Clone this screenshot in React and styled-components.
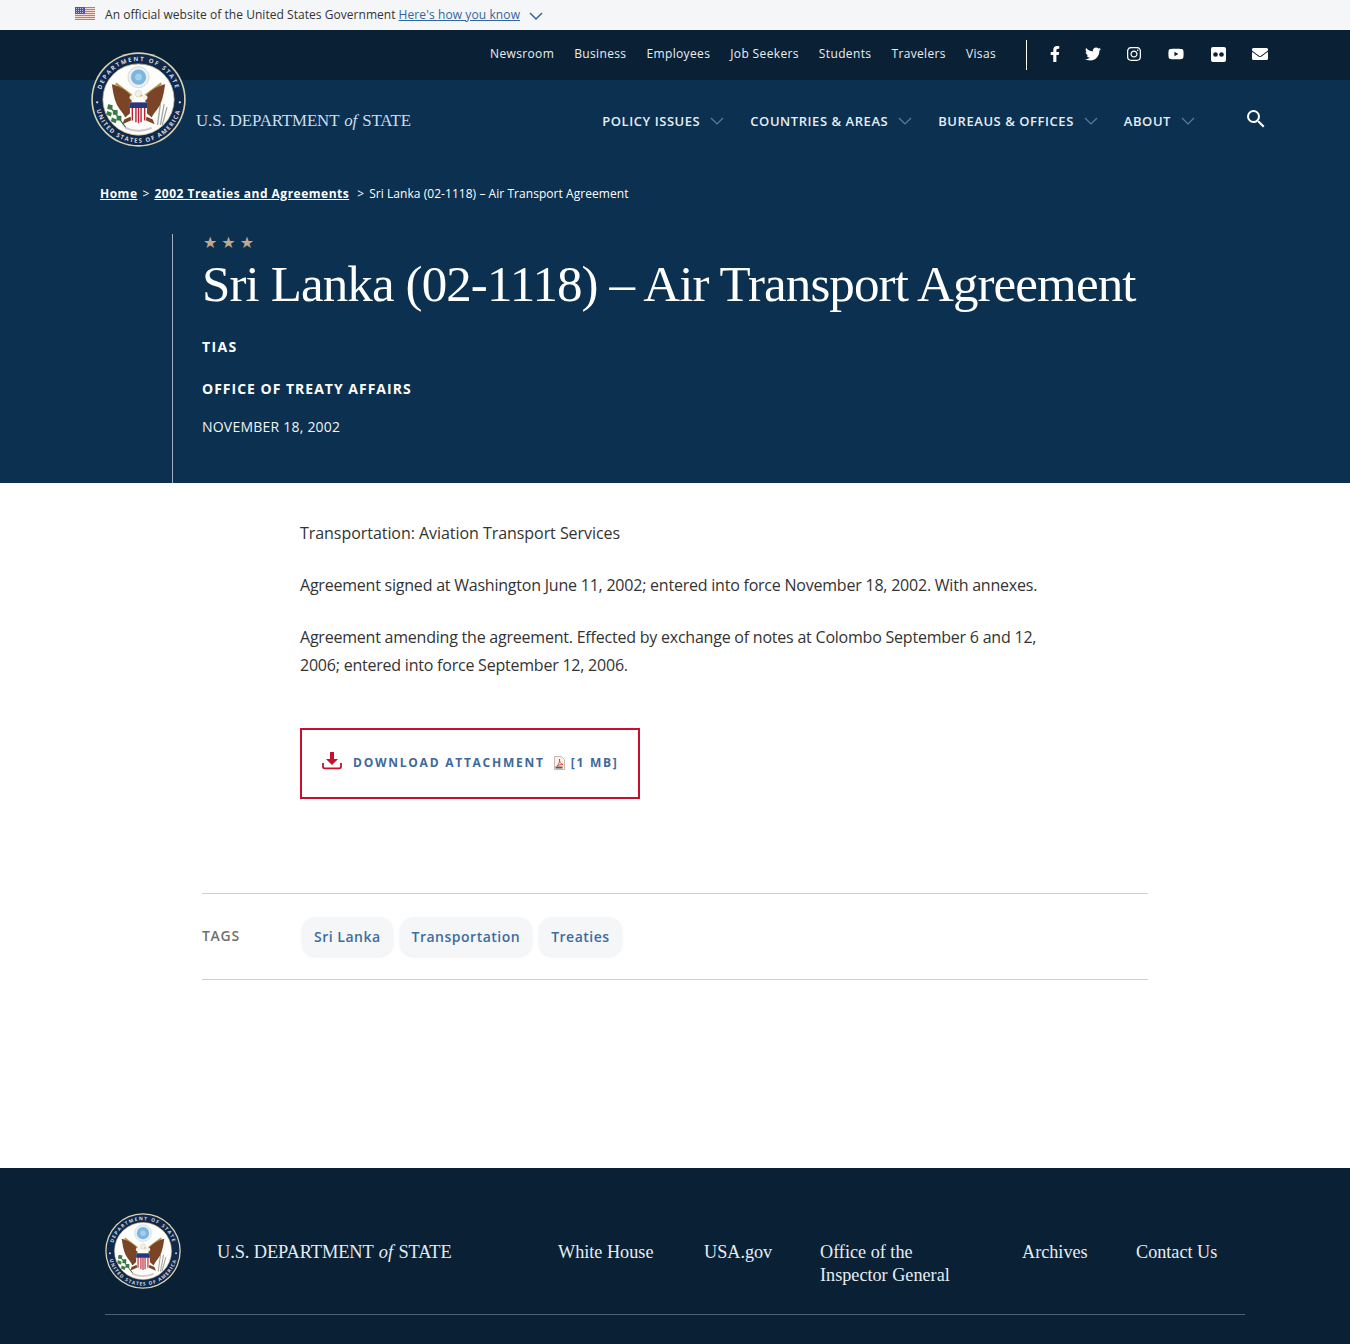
import React from 'react';
import styled, { createGlobalStyle } from 'styled-components';
import { FaFacebookF, FaTwitter, FaInstagram, FaYoutube, FaEnvelope } from 'react-icons/fa';
import { MdSearch } from 'react-icons/md';

const SANS = '"Open Sans", "Liberation Sans", sans-serif';
const SERIF = '"Liberation Serif", "Times New Roman", serif';
const NAVY_DARK = '#0a2135';
const NAVY = '#0c304f';

const GlobalStyle = createGlobalStyle`
  html, body { margin: 0; padding: 0; background: #fff; }
  body { font-family: ${SANS}; color: #333; }
  a { color: inherit; text-decoration: none; }
`;

const Banner = styled.div`
  height: 30px;
  background: #f5f6f7;
  display: flex;
  align-items: center;
  padding-left: 75px;
  font-size: 12px;
  color: #333;
`;

const FlagSlot = styled.span`
  display: flex;
  margin-top: -3px;
`;

const BannerText = styled.span`
  margin: -2px 0 0 10px;
  letter-spacing: 0.04px;
`;

const BannerLink = styled.a`
  margin: -2px 0 0 3px;
  letter-spacing: 0.1px;
  color: #33669f;
  text-decoration: underline;
`;

const BannerChevron = styled.svg`
  margin-left: 9px;
  margin-top: 2px;
`;

const Header = styled.header`
  position: relative;
  background: ${NAVY};
  color: #fff;
  height: 453px;
`;

const TopBar = styled.div`
  height: 50px;
  background: ${NAVY_DARK};
  display: flex;
  align-items: center;
  justify-content: flex-end;
  padding-right: 82px;
`;

const TopLinks = styled.nav`
  display: flex;
  gap: 20px;
  margin-top: -4px;
  font-size: 12px;
  letter-spacing: 0.36px;
  color: #e8eef3;
`;

const Divider = styled.div`
  width: 1px;
  height: 30px;
  background: #fff;
  margin: 0 23px 0 30px;
`;

const Socials = styled.div`
  display: flex;
  align-items: center;
  gap: 25.4px;
  margin-top: -2px;
  font-size: 16px;
`;

const SocialIcon = styled.span`
  display: flex;
  justify-content: center;
  width: ${p => p.$w}px;
`;

const SealSlot = styled.div`
  position: absolute;
  left: 91px;
  top: 22px;
  line-height: 0;
`;

const MainRow = styled.div`
  height: 80px;
  display: flex;
  align-items: center;
  justify-content: space-between;
  padding: 0 82px 0 196px;
`;

const Wordmark = styled.div`
  margin-top: 1px;
  font-family: ${SERIF};
  white-space: nowrap;
  color: ${p => p.$color};
  font-size: ${p => p.$size}px;
  letter-spacing: ${p => p.$spacing}px;

  em {
    font-style: italic;
    padding: 0 1px;
  }
`;

const MainNav = styled.nav`
  display: flex;
  align-items: center;
`;

const NavItem = styled.a`
  display: flex;
  align-items: center;
  gap: 10px;
  margin: 2px 26px 0 0;
  font-size: 13px;
  font-weight: 600;
  letter-spacing: 0.55px;
  text-transform: uppercase;
  color: #e6edf3;
`;

const SearchButton = styled.span`
  display: flex;
  margin-left: 23px;
  margin-top: -2px;
  font-size: 24px;
`;

const Breadcrumb = styled.div`
  margin: 25px 0 0 100px;
  height: 18px;
  display: flex;
  align-items: center;
  font-size: 12px;
  line-height: 18px;
  letter-spacing: 0.05px;
`;

const Crumb = styled.a`
  font-weight: 700;
  letter-spacing: 0.5px;
  text-decoration: underline;
`;

const CrumbSep = styled.span`
  margin: 0 ${p => p.$after}px 0 ${p => p.$before}px;
`;

const Hero = styled.div`
  margin: 31px 0 0 172px;
  height: 249px;
  border-left: 1px solid #9fb1c1;
  padding-left: 29px;
`;

const Stars = styled.div`
  height: 18px;
  line-height: 18px;
  font-size: 16px;
  letter-spacing: 4px;
  padding-left: 1px;
  color: #c2a98e;
  font-family: "DejaVu Sans", sans-serif;
`;

const Title = styled.h1`
  margin: 1px 0 0;
  height: 62px;
  font-family: ${SERIF};
  font-weight: 400;
  font-size: 51px;
  line-height: 62px;
  letter-spacing: -0.89px;
  white-space: nowrap;
`;

const Eyebrow = styled.div`
  margin-top: ${p => p.$top}px;
  font-size: 14px;
  line-height: 20px;
  font-weight: 700;
  letter-spacing: ${p => p.$spacing}px;
  text-transform: uppercase;
`;

const HeroDate = styled.div`
  margin-top: 18px;
  font-size: 14px;
  line-height: 20px;
  letter-spacing: 0.22px;
  color: #f0f3f6;
`;

const Article = styled.main`
  padding: 36px 0 0 300px;
`;

const Paragraph = styled.p`
  margin: 0 0 24px;
  width: 750px;
  font-size: 16px;
  line-height: 28px;
  letter-spacing: ${p => p.$spacing}px;
  color: #333;
`;

const DownloadButton = styled.a`
  box-sizing: border-box;
  margin-top: 49px;
  width: 340px;
  height: 71px;
  display: flex;
  align-items: center;
  padding: 0 0 2px 20px;
  border: 2px solid #c8102e;
  font-size: 12px;
  font-weight: 700;
  letter-spacing: 1.75px;
  text-transform: uppercase;
  color: #40689a;
`;

const DownloadGlyph = styled.svg`
  margin-top: -3px;
`;

const DownloadLabel = styled.span`
  margin: 0 8px 0 11px;
  white-space: nowrap;
`;

const FileSize = styled.span`
  margin-left: 5px;
  white-space: nowrap;
`;

const TagRow = styled.div`
  margin: 94px 202px 188px;
  height: 87px;
  box-sizing: border-box;
  border-top: 1px solid #cfcfcf;
  border-bottom: 1px solid #cfcfcf;
  display: flex;
  align-items: center;
`;

const TagLabel = styled.span`
  width: 100px;
  font-size: 14px;
  font-weight: 600;
  letter-spacing: 0.7px;
  color: #707070;
  margin-top: -2px;
`;

const Tags = styled.div`
  display: flex;
  gap: 7px;
`;

const Tag = styled.a`
  height: 39px;
  display: flex;
  align-items: center;
  padding: 0 12px;
  border-radius: 14px;
  background: #f5f6f8;
  box-shadow: 0 1px 3px rgba(0, 0, 0, 0.08);
  font-size: 14px;
  font-weight: 600;
  letter-spacing: 0.5px;
  color: #3f6c9e;
`;

const Footer = styled.footer`
  height: 176px;
  box-sizing: border-box;
  background: ${NAVY_DARK};
  padding: 45px 105px 0;
`;

const FooterRow = styled.div`
  display: grid;
  grid-template-columns: 453px 1fr;
  height: 101px;
  border-bottom: 1px solid #4a6277;
`;

const FooterBrand = styled.div`
  display: flex;
  align-items: center;
  gap: 36px;
  height: 76px;
  line-height: 0;
`;

const FooterLinks = styled.nav`
  display: grid;
  grid-template-columns: 146px 116px 202px 114px auto;
  padding-top: 28px;
  font-family: ${SERIF};
  font-size: 18.2px;
  line-height: 23px;
  color: #e6edf3;
`;

const FooterLink = styled.a`
  max-width: 151px;
`;

const Chevron = ({ color = '#5f7d95', w = 14, h = 8 }) => (
  <svg width={w} height={h} viewBox="0 0 14 8" fill="none">
    <path d="M1 1l6 6 6-6" stroke={color} strokeWidth="1.2" />
  </svg>
);

const Flag = () => (
  <svg width="20" height="13" viewBox="0 0 20 13">
    <rect width="20" height="13" fill="#f7dcd2" />
    {[0, 2, 4, 6, 8, 10, 12].map(y => (
      <rect key={y} y={y} width="20" height="1" fill="#de6f58" />
    ))}
    <rect width="10" height="7" fill="#4a55c5" />
    <path d="M1 1.5h8M1 3.5h8M1 5.5h8" stroke="#d8dcf5" strokeWidth="0.8" strokeDasharray="1 1" />
  </svg>
);

const Seal = ({ size, id }) => (
  <svg width={size} height={size} viewBox="0 0 100 100">
    <defs>
      <path id={`${id}-top`} d="M50 50m-40.5 0a40.500 40.500 0 0 1 81 0" />
      <path id={`${id}-bottom`} d="M50 50m-45.500 0a45.500 45.500 0 0 0 91 0" />
    </defs>
    <circle cx="50" cy="50" r="49.700" fill="#d9d3b4" />
    <circle cx="50" cy="50" r="48" fill="#10294a" />
    <circle cx="50" cy="50" r="37.500" fill="#fdfdfb" stroke="#c8bd8c" strokeWidth="0.8" />
    <text fontFamily={SANS} fontSize="6.300" fontWeight="700" fill="#d6dce4" letterSpacing="1.750">
      <textPath href={`#${id}-top`} startOffset="50%" textAnchor="middle">DEPARTMENT OF STATE</textPath>
    </text>
    <text fontFamily={SANS} fontSize="6.300" fontWeight="700" fill="#d6dce4" letterSpacing="1.350">
      <textPath href={`#${id}-bottom`} startOffset="50%" textAnchor="middle">UNITED STATES OF AMERICA</textPath>
    </text>
    <circle cx="6.500" cy="53" r="1.200" fill="#d6dce4" />
    <circle cx="93.500" cy="53" r="1.200" fill="#d6dce4" />
    {/* crest above the eagle */}
    <circle cx="50" cy="26.500" r="11" fill="#e8f1f6" stroke="#a8bfcc" strokeWidth="0.9" strokeDasharray="1 0.7" />
    <circle cx="50" cy="26.500" r="8" fill="#7db5dc" />
    <circle cx="50" cy="26.500" r="3.500" fill="#a6d0ea" />
    {/* arrows and branch */}
    <path d="M26 33l17 13M74 33L57 46" stroke="#b6924f" strokeWidth="2.200" />
    <path d="M19 56l18 24" stroke="#2f6a3a" strokeWidth="1.300" />
    <path d="M18 55l5 1-1 5-5-1zM23 61l5 0 0 5-5 0zM27 67l5 0 0 5-5 0zM17 62l5 2-1 4-5-2zM22 69l5 2-1 4-5-2z" fill="#3a7a46" />
    <path d="M73 55l-3 22M77 55l-4 22M80 58l-5 19" stroke="#a7a79e" strokeWidth="1.400" />
    {/* wings */}
    <path d="M22 34c6 1 15 6 20 12l2 16-8 7c-2-5-6-8-9-14-3-7-4-14-5-21z" fill="#7a4526" />
    <path d="M78 34c-6 1-15 6-20 12l-2 16 8 7c2-5 6-8 9-14 3-7 4-14 5-21z" fill="#7a4526" />
    <path d="M42 72l-9 4 2-5 7-3zM58 72l9 4-2-5-7-3z" fill="#7a4526" />
    {/* head */}
    <circle cx="50" cy="44" r="3.600" fill="#f2efe3" stroke="#c4bda5" strokeWidth="0.4" />
    <circle cx="43" cy="48" r="2.500" fill="#f2efe3" />
    <circle cx="57" cy="48" r="2.500" fill="#f2efe3" />
    <path d="M52 45l3 1-3 1z" fill="#d7a63a" />
    {/* shield */}
    <path d="M41 53h18v13c0 4-5 7-9 9-4-2-9-5-9-9z" fill="#fff" />
    <path d="M41 53h18v6H41z" fill="#27397a" />
    <path d="M43.500 59v13M47.300 59v15M50 59v16M52.700 59v15M56.500 59v13" stroke="#bd2332" strokeWidth="1.500" />
    <path d="M36 80c5 2 9 3 14 3s9-1 14-3" stroke="#d7c9cf" strokeWidth="2.400" fill="none" />
  </svg>
);

const DownloadIcon = () => (
  <DownloadGlyph width="20" height="18" viewBox="0 0 20 18" fill="none">
    <path d="M8 0h4v7h4l-6 6-6-6h4z" fill="#c8102e" />
    <path d="M1 11v3.500c0 1 .8 1.800 1.800 1.800h14.400c1 0 1.800-.8 1.800-1.800V11" stroke="#c8102e" strokeWidth="1.800" />
  </DownloadGlyph>
);

const PdfIcon = () => (
  <svg width="13" height="14" viewBox="0 0 13 14" fill="none">
    <path d="M1.500.5h7l3 3v10h-10z" fill="#faf3ee" stroke="#c9b9ad" />
    <path d="M4 10c2-2 3-5 2.500-7C6 5 7.500 8 10 8.500 8 8.500 5.500 9 4 10z" stroke="#d8392b" strokeWidth="0.9" />
    <rect x="2.500" y="10.500" width="7" height="2" fill="#5a5a5a" />
  </svg>
);

const FlickrIcon = () => (
  <svg width="15" height="15" viewBox="0 0 15 15">
    <rect width="15" height="15" rx="2" fill="#fff" />
    <circle cx="4.500" cy="7.500" r="2.300" fill={NAVY_DARK} />
    <circle cx="10.500" cy="7.500" r="2.300" fill={NAVY_DARK} />
  </svg>
);

const topLinks = ['Newsroom', 'Business', 'Employees', 'Job Seekers', 'Students', 'Travelers', 'Visas'];
const navItems = ['Policy Issues', 'Countries & Areas', 'Bureaus & Offices', 'About'];
const tags = ['Sri Lanka', 'Transportation', 'Treaties'];

const App = () => (
  <>
    <GlobalStyle />
    <Banner>
      <FlagSlot><Flag /></FlagSlot>
      <BannerText>An official website of the United States Government</BannerText>
      <BannerLink href="#">Here's how you know</BannerLink>
      <BannerChevron width="14" height="8" viewBox="0 0 14 8" fill="none">
        <path d="M1 1l6 6 6-6" stroke="#33669f" strokeWidth="1.500" />
      </BannerChevron>
    </Banner>
    <Header>
      <TopBar>
        <TopLinks>
          {topLinks.map(link => (
            <a key={link} href="#">{link}</a>
          ))}
        </TopLinks>
        <Divider />
        <Socials>
          <SocialIcon $w={10}><FaFacebookF /></SocialIcon>
          <SocialIcon $w={16}><FaTwitter /></SocialIcon>
          <SocialIcon $w={14}><FaInstagram /></SocialIcon>
          <SocialIcon $w={19}><FaYoutube /></SocialIcon>
          <SocialIcon $w={15}><FlickrIcon /></SocialIcon>
          <SocialIcon $w={17}><FaEnvelope /></SocialIcon>
        </Socials>
      </TopBar>
      <SealSlot><Seal size={95} id="head" /></SealSlot>
      <MainRow>
        <Wordmark $color="#cddded" $size={16.85} $spacing={-0.1}>
          U.S. DEPARTMENT <em>of</em> STATE
        </Wordmark>
        <MainNav>
          {navItems.map(item => (
            <NavItem key={item} href="#">
              {item}
              <Chevron />
            </NavItem>
          ))}
          <SearchButton><MdSearch /></SearchButton>
        </MainNav>
      </MainRow>
      <Breadcrumb>
        <Crumb href="#">Home</Crumb>
        <CrumbSep $before={5} $after={5}>&gt;</CrumbSep>
        <Crumb href="#">2002 Treaties and Agreements</Crumb>
        <CrumbSep $before={8} $after={5}>&gt;</CrumbSep>
        <span>Sri Lanka (02-1118) – Air Transport Agreement</span>
      </Breadcrumb>
      <Hero>
        <Stars>★★★</Stars>
        <Title>Sri Lanka (02-1118) – Air Transport Agreement</Title>
        <Eyebrow $top={22} $spacing={1.4}>TIAS</Eyebrow>
        <Eyebrow $top={22} $spacing={1}>Office of Treaty Affairs</Eyebrow>
        <HeroDate>NOVEMBER 18, 2002</HeroDate>
      </Hero>
    </Header>
    <Article>
      <Paragraph $spacing={-0.05}>Transportation: Aviation Transport Services</Paragraph>
      <Paragraph $spacing={-0.22}>Agreement signed at Washington June 11, 2002; entered into force November 18, 2002. With annexes.</Paragraph>
      <Paragraph $spacing={-0.22}>Agreement amending the agreement. Effected by exchange of notes at Colombo September 6 and 12, 2006; entered into force September 12, 2006.</Paragraph>
      <DownloadButton href="#">
        <DownloadIcon />
        <DownloadLabel>Download Attachment</DownloadLabel>
        <PdfIcon />
        <FileSize>[1 MB]</FileSize>
      </DownloadButton>
    </Article>
    <TagRow>
      <TagLabel>TAGS</TagLabel>
      <Tags>
        {tags.map(tag => (
          <Tag key={tag} href="#">{tag}</Tag>
        ))}
      </Tags>
    </TagRow>
    <Footer>
      <FooterRow>
        <FooterBrand>
          <Seal size={76} id="foot" />
          <Wordmark $color="#e3ecf3" $size={18.4} $spacing={-0.1}>
            U.S. DEPARTMENT <em>of</em> STATE
          </Wordmark>
        </FooterBrand>
        <FooterLinks>
          <FooterLink href="#">White House</FooterLink>
          <FooterLink href="#">USA.gov</FooterLink>
          <FooterLink href="#">Office of the Inspector General</FooterLink>
          <FooterLink href="#">Archives</FooterLink>
          <FooterLink href="#">Contact Us</FooterLink>
        </FooterLinks>
      </FooterRow>
    </Footer>
  </>
);

export default App;
